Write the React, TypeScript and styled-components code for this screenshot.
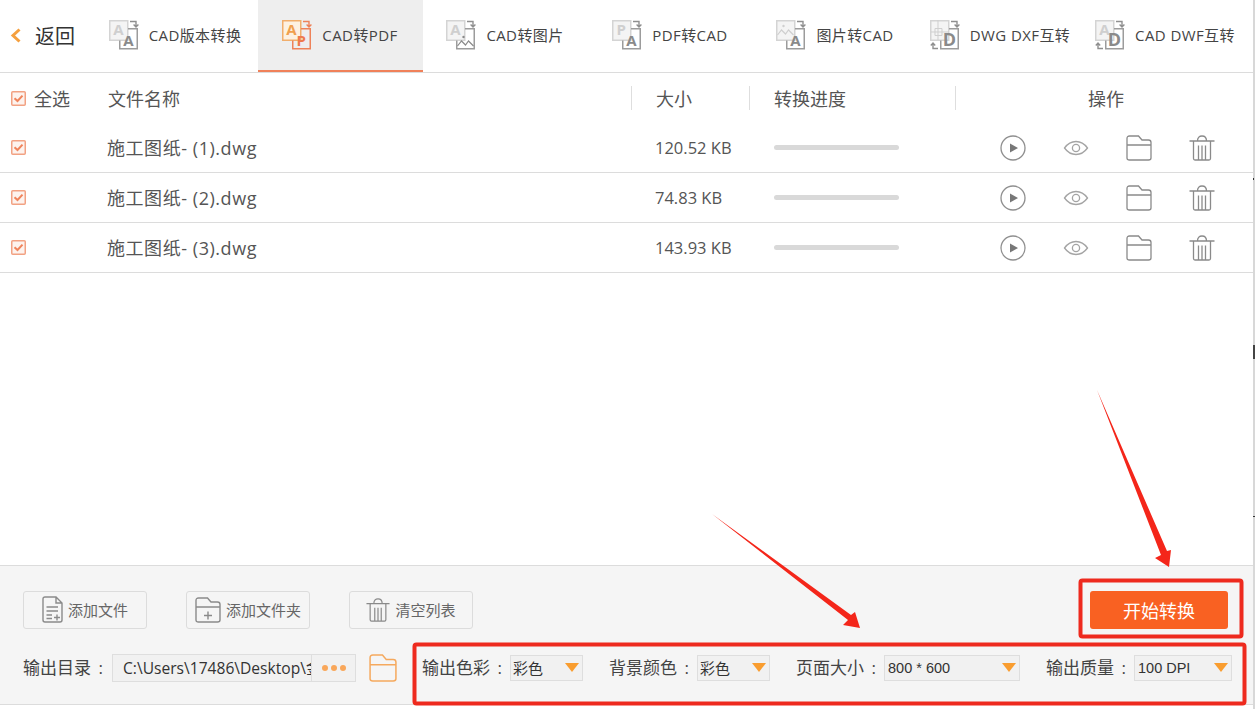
import React from "react";
import styled, { createGlobalStyle } from "styled-components";

const FONT = `"Open Sans", "Noto Sans CJK SC", "Noto Sans", sans-serif`;

const Global = createGlobalStyle`
  html, body { margin: 0; padding: 0; height: 100%; background: #fff; overflow: hidden; }
  #root { height: 100%; }
  * { box-sizing: border-box; }
`;

const Page = styled.div`
  position: relative;
  width: 1255px;
  height: 709px;
  background: #fff;
  font-family: ${FONT};
  color: #444;
`;

const Shell = styled.div`
  width: 1255px;
  height: 709px;
  padding-bottom: 4px;
  border-right: 2px solid #d8d8d8;
  display: flex;
  flex-direction: column;
`;

const TopBar = styled.header`
  flex: 0 0 73px;
  display: flex;
  border-bottom: 1px solid #dcdcdc;
`;

const Back = styled.div`
  flex: 0 0 93px;
  display: flex;
  align-items: center;
  padding-left: 10px;
  gap: 13px;
  font-size: 20px;
  color: #333;
  padding-bottom: 2px;
`;

const Tab = styled.div<{ $active?: boolean }>`
  flex: 0 0 165px;
  display: flex;
  align-items: center;
  justify-content: center;
  gap: 10px;
  font-size: 15px;
  letter-spacing: 0.4px;
  color: #444;
  white-space: nowrap;
  padding: 0 1px 2px 0;
  background: ${(p) => (p.$active ? "#eeeeee" : "transparent")};
  border-bottom: 2px solid ${(p) => (p.$active ? "#f0815a" : "transparent")};
`;

const ListArea = styled.main`
  flex: 1;
  min-height: 0;
`;

const COLUMNS = "107px 524px 118px 206px 1fr";

const HeadRow = styled.div`
  display: grid;
  grid-template-columns: ${COLUMNS};
  height: 50px;
  align-items: center;
  font-size: 18px;
  color: #555;
`;

const SelectAll = styled.label`
  display: flex;
  align-items: center;
  gap: 8px;
  padding-left: 11px;
`;

const HeadCell = styled.div<{ $center?: boolean; $divided?: boolean }>`
  height: 24px;
  line-height: 27px;
  padding-left: ${(p) => (p.$center ? "3px" : p.$divided ? "24px" : "1px")};
  border-left: ${(p) => (p.$divided ? "1px solid #dedede" : "none")};
  text-align: ${(p) => (p.$center ? "center" : "left")};
`;

const Row = styled.div`
  display: grid;
  grid-template-columns: ${COLUMNS};
  height: 50px;
  align-items: center;
  border-bottom: 1px solid #dcdcdc;
  color: #555;
`;

const CheckCell = styled.div`
  padding-left: 11px;
  display: flex;
  padding-bottom: 1px;
`;

const NameCell = styled.div`
  font-size: 18px;
  letter-spacing: 0.55px;
  padding-bottom: 2px;
`;

const SizeCell = styled.div`
  font-size: 16.5px;
  padding-left: 24px;
  padding-bottom: 1px;
`;

const ProgressCell = styled.div`
  padding-left: 25px;
  padding-bottom: 1px;
`;

const ProgressTrack = styled.div`
  width: 125px;
  height: 5px;
  border-radius: 3px;
  background: #d9d9d9;
`;

const Actions = styled.div`
  display: flex;
  align-items: center;
  gap: 37px;
  padding-left: 45px;
`;

const Footer = styled.footer`
  flex: 0 0 140px;
  background: #f5f5f5;
  border-top: 1px solid #dcdcdc;
  border-bottom: 1px solid #dcdcdc;
  padding: 25px 25px 0 23px;
  display: flex;
  flex-direction: column;
`;

const ButtonRow = styled.div`
  display: flex;
  align-items: center;
  height: 38px;
  gap: 39px;
`;

const ToolButton = styled.button`
  width: 124px;
  height: 38px;
  display: flex;
  align-items: center;
  justify-content: center;
  gap: 5px;
  background: #f5f5f5;
  border: 1px solid #dcdcdc;
  border-radius: 3px;
  font-family: ${FONT};
  font-size: 15px;
  line-height: 20px;
  color: #666;
  padding: 0 0 1px;
`;

const StartButton = styled.button`
  margin-left: auto;
  width: 138px;
  height: 38px;
  background: #f96122;
  border: none;
  border-radius: 3px;
  color: #fff;
  font-family: ${FONT};
  font-size: 18px;
  padding: 0;
`;

const OutputRow = styled.div`
  display: flex;
  align-items: center;
  margin-top: 25px;
  height: 28px;
`;

const Label = styled.span<{ $width: number }>`
  flex: 0 0 ${(p) => p.$width}px;
  font-size: 17px;
  word-spacing: 3px;
  color: #444;
  white-space: nowrap;
  margin-top: -3px;
`;

const PathField = styled.div`
  flex: 0 0 244px;
  min-width: 0;
  height: 28px;
  display: flex;
  background: #f1f1f1;
  border: 1px solid #dedede;
`;

const PathText = styled.div`
  flex: 1;
  min-width: 0;
  overflow: hidden;
  white-space: nowrap;
  padding-left: 10px;
  font-size: 15.6px;
  line-height: 26px;
  color: #333;
`;

const MoreButton = styled.div`
  flex: 0 0 44px;
  border-left: 1px solid #dedede;
  display: flex;
  align-items: center;
  justify-content: center;
  gap: 3px;
`;

const Dot = styled.span`
  width: 6px;
  height: 6px;
  border-radius: 50%;
  background: #f9a75a;
`;

const OutFolder = styled.div`
  margin-left: 13px;
  margin-right: 25px;
  display: flex;
`;

const Group = styled.div`
  display: flex;
  align-items: center;
  margin-right: 26px;
`;

const Select = styled.div<{ $width: number; $latin?: boolean }>`
  position: relative;
  flex: 0 0 ${(p) => p.$width}px;
  height: 26px;
  background: #f1f1f1;
  border: 1px solid #dedede;
  padding-left: ${(p) => (p.$latin ? "3px" : "2px")};
  font-family: ${(p) => (p.$latin ? `"Liberation Sans", sans-serif` : FONT)};
  font-size: ${(p) => (p.$latin ? "14.5px" : "15px")};
  line-height: 24px;
  color: #333;
  &::after {
    content: "";
    position: absolute;
    right: 3px;
    top: 7px;
    border-left: 7px solid transparent;
    border-right: 7px solid transparent;
    border-top: 9px solid #f99d2f;
  }
`;

const Overlay = styled.svg`
  position: absolute;
  left: 0;
  top: 0;
  width: 1256px;
  height: 709px;
  pointer-events: none;
`;

const Spec = styled.div`
  display: flex;
`;

function Check() {
  return (
    <Spec>
      <svg width="15" height="15" viewBox="0 0 15 15">
        <rect x=".75" y=".75" width="13.5" height="13.5" rx="1" fill="#fdf3ee" stroke="#f2a283" strokeWidth="1.5" />
        <path d="M3.5 7.2 6.5 10 11.5 4.6" fill="none" stroke="#f0845c" strokeWidth="2" />
      </svg>
    </Spec>
  );
}

type Kind = "A" | "P" | "D" | "img" | "grid";

function Glyph({ kind, x, y, color, size }: { kind: Kind; x: number; y: number; color: string; size: number }) {
  if (kind === "img") {
    return (
      <g fill="none" stroke={color} strokeWidth="1.2">
        <circle cx={x - 2} cy={y - 9} r="1.2" fill={color} stroke="none" />
        <path d={`M${x - 8} ${y}L${x - 4} ${y - 5}L${x} ${y - 1}L${x + 3} ${y - 5}L${x + 8} ${y}`} />
      </g>
    );
  }
  if (kind === "grid") {
    return (
      <g fill="none" stroke={color} strokeWidth="1">
        <path d="M8 1V21M1 13H19M5 9.5H12V16.5H5Z" />
      </g>
    );
  }
  return (
    <text
      x={x}
      y={y}
      textAnchor="middle"
      fontFamily='"Open Sans", sans-serif'
      fontWeight="700"
      fontSize={size}
      fill={color}
    >
      {kind}
    </text>
  );
}

function TabIcon({ back, front, active, swap }: { back: Kind; front: Kind; active?: boolean; swap?: boolean }) {
  const backStroke = active ? "#f1ae6c" : "#d4d4d4";
  const backFill = active ? "#fdf1e2" : "#f4f4f4";
  const backLetter = active ? "#f0a04e" : "#cfcfcf";
  const frontStroke = active ? "#ee8259" : "#9c9c9c";
  const arrow = active ? "#ee8259" : "#8f8f8f";
  return (
    <svg width="30" height="31" viewBox="0 0 30 31">
      <rect x=".75" y="1.75" width="18" height="19.5" fill={backFill} stroke={backStroke} strokeWidth="1.5" />
      <path d="M19 9.75H28.25V29.75H10.75V21.5" fill="none" stroke={frontStroke} strokeWidth="1.5" />
      <path d="M21 2.5H27V7.5M24.6 5.5L27 8L29.4 5.5" fill="none" stroke={arrow} strokeWidth="1.4" />
      {swap && <path d="M8 29.5H3V24.5M.8 26.5L3 24L5.2 26.5" fill="none" stroke={arrow} strokeWidth="1.4" />}
      <Glyph kind={back} x={9.5} y={16} color={backLetter} size={15} />
      <Glyph kind={front} x={19.5} y={27} color={active ? "#ee7a4c" : "#8a8a8a"} size={front === "D" ? 18 : 15} />
    </svg>
  );
}

function FolderIcon({ size = 26, color = "#8a8a8a", width = 1.3 }: { size?: number; color?: string; width?: number }) {
  return (
    <svg width={size} height={size} viewBox="0 0 26 26" fill="none" stroke={color} strokeWidth={width}>
      <path d="M1 3.5Q1 1 3.5 1H12.5L16 5H22.5Q25 5 25 7.5V23Q25 25 22.5 25H3.5Q1 25 1 23ZM1 10H25" />
    </svg>
  );
}

function TrashIcon({ size = 26, color = "#8a8a8a" }: { size?: number; color?: string }) {
  return (
    <svg width={size} height={size} viewBox="0 0 26 26" fill="none" stroke={color} strokeWidth="1.3">
      <path d="M.5 6H25.5M8.5 6C8.5 2.5 10.5 1 13 1S17.5 2.5 17.5 6M4.5 6V23.5Q4.5 25 6 25H20Q21.5 25 21.5 23.5V6M9.5 10.5V25M13 10.5V25M16.5 10.5V25" />
    </svg>
  );
}

function PlayIcon() {
  return (
    <svg width="26" height="26" viewBox="0 0 26 26" fill="none">
      <circle cx="13" cy="13" r="12" stroke="#8f8f8f" strokeWidth="1.3" />
      <path d="M10 8.5 18 13 10 17.5Z" fill="#777" />
    </svg>
  );
}

function EyeIcon() {
  return (
    <svg width="26" height="26" viewBox="0 0 26 26" fill="none" stroke="#a4a4a4" strokeWidth="1.3">
      <path d="M1.5 13C5 8.2 9 6.5 13 6.5S21 8.2 24.5 13C21 17.8 17 19.5 13 19.5S5 17.8 1.5 13Z" />
      <circle cx="13" cy="13" r="3.6" />
    </svg>
  );
}

function AddFileIcon() {
  return (
    <svg width="21" height="27" viewBox="0 0 21 27" fill="none" stroke="#8a8a8a" strokeWidth="1.4">
      <path d="M14 1H3Q1 1 1 3V24Q1 26 3 26H18Q20 26 20 24V7ZM14 1V7H20" />
      <path d="M4.5 11H16M4.5 15H16M4.5 19H10M4.5 22.5H10M15 18.5V24.5M12 21.5H18" />
    </svg>
  );
}

function AddFolderIcon() {
  return (
    <svg width="26" height="26" viewBox="0 0 26 26" fill="none" stroke="#8a8a8a" strokeWidth="1.4">
      <path d="M1 3.5Q1 1 3.5 1H12.5L16 5H22.5Q25 5 25 7.5V23Q25 25 22.5 25H3.5Q1 25 1 23ZM1 10H25M13 14.5V22.5M9 18.5H17" />
    </svg>
  );
}

const tabs: { label: string; back: Kind; front: Kind; swap?: boolean }[] = [
  { label: "CAD版本转换", back: "A", front: "A" },
  { label: "CAD转PDF", back: "A", front: "P" },
  { label: "CAD转图片", back: "A", front: "img" },
  { label: "PDF转CAD", back: "P", front: "A" },
  { label: "图片转CAD", back: "img", front: "A" },
  { label: "DWG DXF互转", back: "grid", front: "D", swap: true },
  { label: "CAD DWF互转", back: "A", front: "D", swap: true },
];

const files = [
  { name: "施工图纸- (1).dwg", size: "120.52 KB" },
  { name: "施工图纸- (2).dwg", size: "74.83 KB" },
  { name: "施工图纸- (3).dwg", size: "143.93 KB" },
];

const selects = [
  { label: "输出色彩 :", value: "彩色", width: 73 },
  { label: "背景颜色 :", value: "彩色", width: 73 },
  { label: "页面大小 :", value: "800 * 600", width: 136, latin: true },
  { label: "输出质量 :", value: "100 DPI", width: 98, latin: true },
];

export default function App() {
  return (
    <Page>
      <Global />
      <Shell>
        <TopBar>
          <Back>
            <svg width="12" height="15" viewBox="0 0 12 15" fill="none">
              <path d="M9.5 1.5 3 7.5 9.5 13.5" stroke="#f5a03f" strokeWidth="3" />
            </svg>
            返回
          </Back>
          {tabs.map((t, i) => (
            <Tab key={t.label} $active={i === 1}>
              <TabIcon back={t.back} front={t.front} swap={t.swap} active={i === 1} />
              {t.label}
            </Tab>
          ))}
        </TopBar>
        <ListArea>
          <HeadRow>
            <SelectAll>
              <Check />
              全选
            </SelectAll>
            <HeadCell>文件名称</HeadCell>
            <HeadCell $divided>大小</HeadCell>
            <HeadCell $divided>转换进度</HeadCell>
            <HeadCell $divided $center>操作</HeadCell>
          </HeadRow>
          {files.map((f) => (
            <Row key={f.name}>
              <CheckCell>
                <Check />
              </CheckCell>
              <NameCell>{f.name}</NameCell>
              <SizeCell>{f.size}</SizeCell>
              <ProgressCell>
                <ProgressTrack />
              </ProgressCell>
              <Actions>
                <PlayIcon />
                <EyeIcon />
                <FolderIcon />
                <TrashIcon />
              </Actions>
            </Row>
          ))}
        </ListArea>
        <Footer>
          <ButtonRow>
            <ToolButton>
              <AddFileIcon />
              添加文件
            </ToolButton>
            <ToolButton>
              <AddFolderIcon />
              添加文件夹
            </ToolButton>
            <ToolButton>
              <TrashIcon size={24} />
              清空列表
            </ToolButton>
            <StartButton>开始转换</StartButton>
          </ButtonRow>
          <OutputRow>
            <Label $width={89}>输出目录 :</Label>
            <PathField>
              <PathText>C:\Users\17486\Desktop\金舟</PathText>
              <MoreButton>
                <Dot />
                <Dot />
                <Dot />
              </MoreButton>
            </PathField>
            <OutFolder>
              <FolderIcon size={28} color="#f5a95e" width={1.4} />
            </OutFolder>
            {selects.map((s) => (
              <Group key={s.label}>
                <Label $width={88}>{s.label}</Label>
                <Select $width={s.width} $latin={s.latin}>
                  {s.value}
                </Select>
              </Group>
            ))}
          </OutputRow>
        </Footer>
      </Shell>
      <Overlay viewBox="0 0 1256 709">
        <rect x="1080.5" y="580.5" width="161" height="56" rx="2" fill="none" stroke="#ee2a1e" strokeWidth="4" />
        <rect x="414.5" y="644.5" width="830" height="59" rx="2" fill="none" stroke="#ee2a1e" strokeWidth="4" />
        <polygon points="1097,390 1167,551 1171,550 1169,567 1155,558 1161,555" fill="#f4261a" />
        <polygon points="712,514 851,615 855,612 860,628 843,625 848,620" fill="#f4261a" />
        <rect x="1253" y="178" width="1" height="2" fill="#333" />
        <rect x="1253" y="345" width="2" height="14" fill="#444" />
        <rect x="1253" y="516" width="2" height="1" fill="#333" />
      </Overlay>
    </Page>
  );
}
